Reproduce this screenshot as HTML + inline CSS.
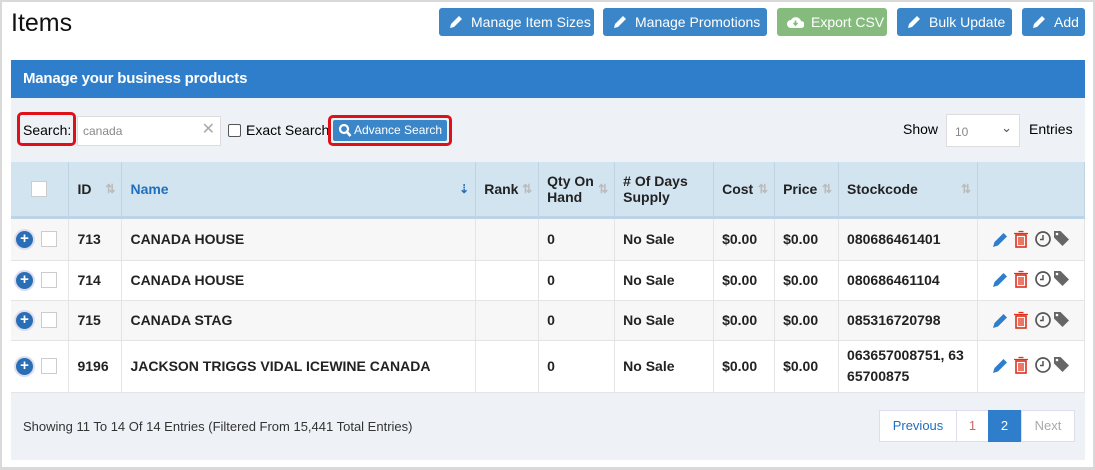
<!DOCTYPE html>
<html><head><meta charset="utf-8"><style>
*{box-sizing:border-box;margin:0;padding:0}
body{width:1095px;height:470px;background:#fff;font-family:"Liberation Sans",sans-serif;position:relative;overflow:hidden}
.frame{position:absolute;left:0;top:0;width:1095px;height:470px;border:2px solid #d9d9d9;border-bottom-width:3px;pointer-events:none}
.a{position:absolute}
h1{position:absolute;left:11px;top:9px;font-size:25px;font-weight:normal;color:#111}
.btn{position:absolute;top:8px;height:28px;background:#3a86c8;color:#fff;border-radius:3px;font-size:14px;line-height:28px;padding-left:32px}
.btn svg{position:absolute;left:10px;top:7px}
.panel{position:absolute;left:11px;top:60px;width:1074px;height:400px;background:#eef2f7}
.bar{height:38px;background:#2f7ecb;color:#fff;font-weight:bold;font-size:15px;line-height:38px;padding-left:12px;letter-spacing:-0.2px}
table{position:absolute;left:0;top:102px;width:1074px;border-collapse:collapse;font-size:14px;font-weight:bold;color:#222}
th{background:#d2e4f0;height:55px;text-align:left;padding-left:8px;border-right:1px solid #bfd3e2;border-bottom:3px solid #bcd4e6;font-size:14px;line-height:16px;position:relative}
td{padding-left:8px;border-right:1px solid #e4e4e4;border-bottom:1px solid #e4e4e4}
tr.g td{background:#f7f7f7}tr.w td{background:#fff}
.s{position:absolute;right:6px;top:19px;color:#bbb;font-size:12px}
.cb{display:inline-block;width:16px;height:16px;border:1px solid #ccc;background:#fff;vertical-align:middle}
.plus{display:inline-block;width:17px;height:17px;border-radius:50%;background:#2a6fb5;color:#fff;font-size:15px;line-height:16px;text-align:center;box-shadow:0 0 0 2px #dde;vertical-align:middle;margin-left:-3px;margin-right:8px}
.pg{position:absolute;top:350px;height:32px;border:1px solid #dde;background:#fff;font-size:13px;line-height:30px;text-align:center}
</style></head><body>
<h1>Items</h1>
<div class="btn" style="left:439px;width:155px"><svg width="14" height="14" viewBox="0 0 14 14"><path d="M1 13l1-4 8-8 3 3-8 8z" fill="#fff"/></svg>Manage Item Sizes</div>
<div class="btn" style="left:603px;width:164px"><svg width="14" height="14" viewBox="0 0 14 14"><path d="M1 13l1-4 8-8 3 3-8 8z" fill="#fff"/></svg>Manage Promotions</div>
<div class="btn" style="left:777px;width:110px;background:#86bb7e;padding-left:34px"><svg width="17" height="14" viewBox="0 0 17 14"><path d="M4 13a4 4 0 010-8 5.5 5.5 0 0110 1 3.5 3.5 0 010 7z" fill="#fff"/><path d="M8.5 5.5v4M6.5 8l2 2 2-2" stroke="#86bb7e" stroke-width="1.6" fill="none"/></svg>Export CSV</div>
<div class="btn" style="left:897px;width:115px"><svg width="14" height="14" viewBox="0 0 14 14"><path d="M1 13l1-4 8-8 3 3-8 8z" fill="#fff"/></svg>Bulk Update</div>
<div class="btn" style="left:1022px;width:63px"><svg width="14" height="14" viewBox="0 0 14 14"><path d="M1 13l1-4 8-8 3 3-8 8z" fill="#fff"/></svg>Add</div>
<div class="panel">
<div class="bar">Manage your business products</div>
<div class="a" style="left:6px;top:52px;width:59px;height:34px;border:3px solid #e0101a;border-radius:5px"></div>
<div class="a" style="left:12px;top:62px;font-size:14px">Search:</div>
<div class="a" style="left:66px;top:56px;width:144px;height:30px;background:#fff;border:1px solid #ddd;font-size:12px;color:#888;padding:7px 5px">canada<span style="position:absolute;right:5px;top:2px;font-size:16px;color:#aaa">✕</span></div>
<div class="a" style="left:217px;top:64px;width:13px;height:13px;border:1px solid #555;border-radius:2px;background:#fff"></div>
<div class="a" style="left:235px;top:62px;font-size:14px">Exact Search</div>
<div class="a" style="left:317px;top:55px;width:124px;height:31px;border:3px solid #e0101a;border-radius:5px;padding:2px"><div style="background:#3a86c8;height:21px;border-radius:2px;color:#fff;font-size:12px;line-height:21px;padding-left:21px;position:relative"><svg style="position:absolute;left:5px;top:3px" width="14" height="15" viewBox="0 0 14 15"><circle cx="6" cy="6" r="4" stroke="#fff" stroke-width="2.2" fill="none"/><path d="M9 9l3.5 4" stroke="#fff" stroke-width="2.6"/></svg>Advance Search</div></div>
<div class="a" style="left:892px;top:61px;font-size:14px">Show</div>
<div class="a" style="left:935px;top:54px;width:74px;height:33px;background:#fff;border:1px solid #ddd;font-size:12px;color:#888;padding:10px 8px">10<span style="position:absolute;right:7px;top:5px;color:#555;font-size:13px">⌄</span></div>
<div class="a" style="left:1018px;top:61px;font-size:14px">Entries</div>
<table>
<colgroup><col style="width:58px"><col style="width:53px"><col style="width:354px"><col style="width:63px"><col style="width:76px"><col style="width:99px"><col style="width:61px"><col style="width:64px"><col style="width:139px"><col style="width:107px"></colgroup>
<tr><th style="padding-left:20px"><span class="cb"></span></th><th>ID<span class="s">⇅</span></th><th style="color:#1f6fbf">Name<span class="s" style="color:#2a6fb5">⇣</span></th><th>Rank<span class="s">⇅</span></th><th>Qty On<br>Hand<span class="s">⇅</span></th><th># Of Days<br>Supply</th><th>Cost<span class="s">⇅</span></th><th>Price<span class="s">⇅</span></th><th>Stockcode<span class="s">⇅</span></th><th></th></tr>
<tr class="g" style="height:43px"><td><span class="plus">+</span><span class="cb"></span></td><td>713</td><td>CANADA HOUSE</td><td></td><td>0</td><td>No Sale</td><td>$0.00</td><td>$0.00</td><td>080686461401</td><td></td></tr>
<tr class="w" style="height:40px"><td><span class="plus">+</span><span class="cb"></span></td><td>714</td><td>CANADA HOUSE</td><td></td><td>0</td><td>No Sale</td><td>$0.00</td><td>$0.00</td><td>080686461104</td><td></td></tr>
<tr class="g" style="height:40px"><td><span class="plus">+</span><span class="cb"></span></td><td>715</td><td>CANADA STAG</td><td></td><td>0</td><td>No Sale</td><td>$0.00</td><td>$0.00</td><td>085316720798</td><td></td></tr>
<tr class="w" style="height:52px"><td><span class="plus">+</span><span class="cb"></span></td><td>9196</td><td>JACKSON TRIGGS VIDAL ICEWINE CANADA</td><td></td><td>0</td><td>No Sale</td><td>$0.00</td><td>$0.00</td><td style="line-height:21px">063657008751, 63<br>65700875</td><td></td></tr>
</table>
<div class="a" style="left:12px;top:359px;font-size:13px;color:#333">Showing 11 To 14 Of 14 Entries (Filtered From 15,441 Total Entries)</div>
<div class="pg" style="left:868px;width:78px;color:#1f6fbf">Previous</div>
<div class="pg" style="left:945px;width:33px;color:#c66">1</div>
<div class="pg" style="left:977px;width:33px;background:#2f7ecb;color:#fff;border-color:#2f7ecb">2</div>
<div class="pg" style="left:1010px;width:54px;color:#aaa">Next</div>
</div>
<svg class="a" style="left:991px;top:228px" width="85" height="150">
<defs><g id="ic">
<path d="M2 19l1.5-5 9-9 3.5 3.5-9 9z" fill="#2f7ecb"/>
<rect x="25" y="7" width="10" height="12" fill="none" stroke="#e0301a" stroke-width="1.6"/><path d="M23 5.5h14M27.5 3.5h5M28 9v8M30 9v8M32 9v8" stroke="#e0301a" stroke-width="1.3"/>
<circle cx="52" cy="11" r="7" fill="none" stroke="#555" stroke-width="1.7"/><path d="M52 7v4.5h-3" stroke="#555" stroke-width="1.5" fill="none"/>
<path d="M63 3h6.5l8.5 8.5-6.5 6.5-8.5-8.5z" fill="#666"/><circle cx="66" cy="6" r="1.3" fill="#fff"/>
</g></defs>
<use href="#ic" y="0"/><use href="#ic" y="40"/><use href="#ic" y="81"/><use href="#ic" y="126"/>
</svg>
<div class="frame"></div>
</body></html>
